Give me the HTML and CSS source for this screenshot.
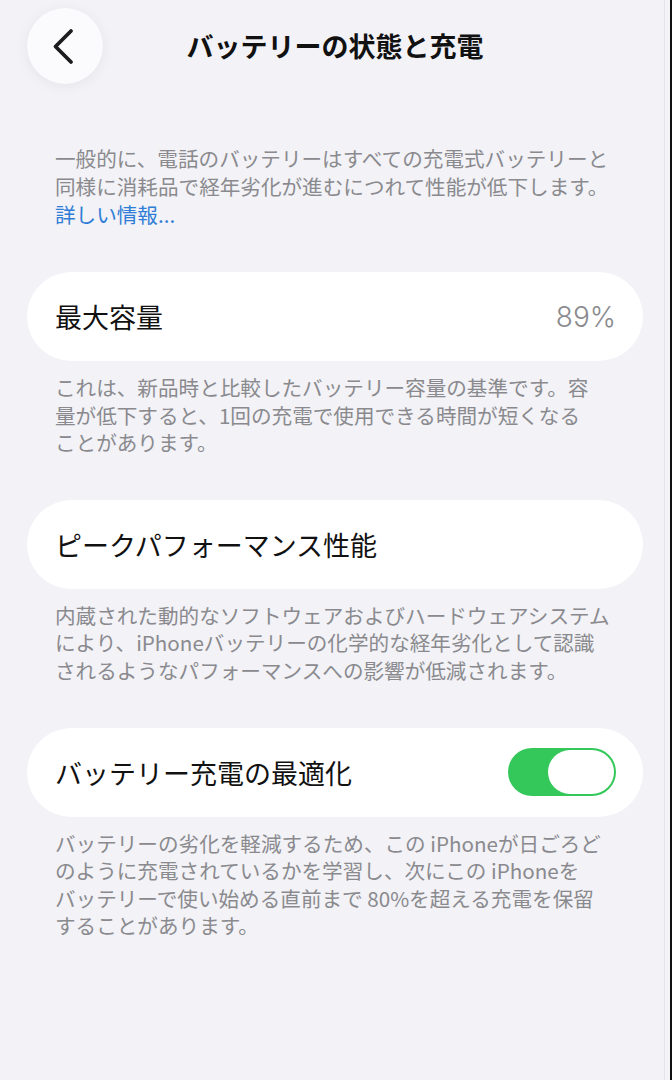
FILE: index.html
```html
<!DOCTYPE html>
<html lang="ja">
<head>
<meta charset="utf-8">
<link rel="stylesheet" href="styles.css">
</head>
<body>
<div class="screen">
  <header class="nav">
    <div class="back">
      <svg width="76" height="76" viewBox="0 0 76 76"><path d="M44 23 L28.5 38.5 L44 54" fill="none" stroke="#1c1c1e" stroke-width="3.8" stroke-linecap="round" stroke-linejoin="round"/></svg>
    </div>
    <h1 class="title">バッテリーの状態と充電</h1>
    <div></div>
  </header>
  <main class="content">
    <p class="note intro">一般的に、電話のバッテリーはすべての充電式バッテリーと<br>同様に消耗品で経年劣化が進むにつれて性能が低下します。<br><span class="link">詳しい情報...</span></p>

    <div class="card first">
      <span class="label">最大容量</span>
      <span class="value">89%</span>
    </div>
    <p class="note">これは、新品時と比較したバッテリー容量の基準です。容<br>量が低下すると、1回の充電で使用できる時間が短くなる<br>ことがあります。</p>

    <div class="card">
      <span class="label">ピークパフォーマンス性能</span>
    </div>
    <p class="note">内蔵された動的なソフトウェアおよびハードウェアシステム<br>により、iPhoneバッテリーの化学的な経年劣化として認識<br>されるようなパフォーマンスへの影響が低減されます。</p>

    <div class="card">
      <span class="label">バッテリー充電の最適化</span>
      <span class="toggle"><span class="knob"></span></span>
    </div>
    <p class="note">バッテリーの劣化を軽減するため、この iPhoneが日ごろど<br>のように充電されているかを学習し、次にこの iPhoneを<br>バッテリーで使い始める直前まで 80%を超える充電を保留<br>することがあります。</p>
  </main>
</div>
</body>
</html>
```

FILE: styles.css
```css
* { box-sizing: border-box; }
html, body { margin: 0; padding: 0; }
body {
  background: #f2f2f7;
  font-family: "Noto Sans CJK JP", "Noto Sans", sans-serif;
  color: #000;
}
.screen {
  width: 672px;
  min-height: 1080px;
  border-right: 2px solid #111;
  background: linear-gradient(to left, transparent 5px, #e4e4e8 5px, #e4e4e8 6px, transparent 6px), #f2f2f7;
}
.nav {
  display: grid;
  grid-template-columns: 76px 1fr 76px;
  align-items: center;
  padding: 8px 27px 0 27px;
  height: 84px;
}
.back {
  width: 76px;
  height: 76px;
  border-radius: 50%;
  background: #fbfbfd;
  box-shadow: 0 2px 14px rgba(0,0,0,0.06);
  display: flex;
}
.title {
  margin: 0;
  text-align: center;
  font-size: 27px;
  font-weight: 700;
  line-height: 1;
  padding-bottom: 2px;
  color: #111;
}
.content {
  padding: 0 27px;
}
.note {
  margin: 0;
  padding: 0 0 0 28px;
  font-size: 20.6px;
  line-height: 27.6px;
  color: #8a8a8e;
  white-space: nowrap;
}
.intro {
  margin-top: 60px;
  line-height: 28px;
}
.link { color: #2f7dd6; }
.card {
  height: 89px;
  border-radius: 44.5px;
  background: #fff;
  display: flex;
  align-items: center;
  justify-content: space-between;
  padding: 0 27px 0 28px;
  margin-top: 43px;
  margin-bottom: 13px;
}
.card.first { margin-top: 44px; }
.label {
  font-size: 27px;
  color: #111;
}
.value {
  font-size: 28px;
  color: #8a8a8e;
  font-family: "Inter", "Noto Sans", sans-serif;
  font-weight: 300;
}
.toggle {
  width: 108px;
  height: 48px;
  border-radius: 24px;
  background: #34c759;
  display: flex;
  justify-content: flex-end;
  padding: 2px;
}
.knob {
  width: 66px;
  height: 44px;
  border-radius: 22px;
  background: #fff;
}
```
